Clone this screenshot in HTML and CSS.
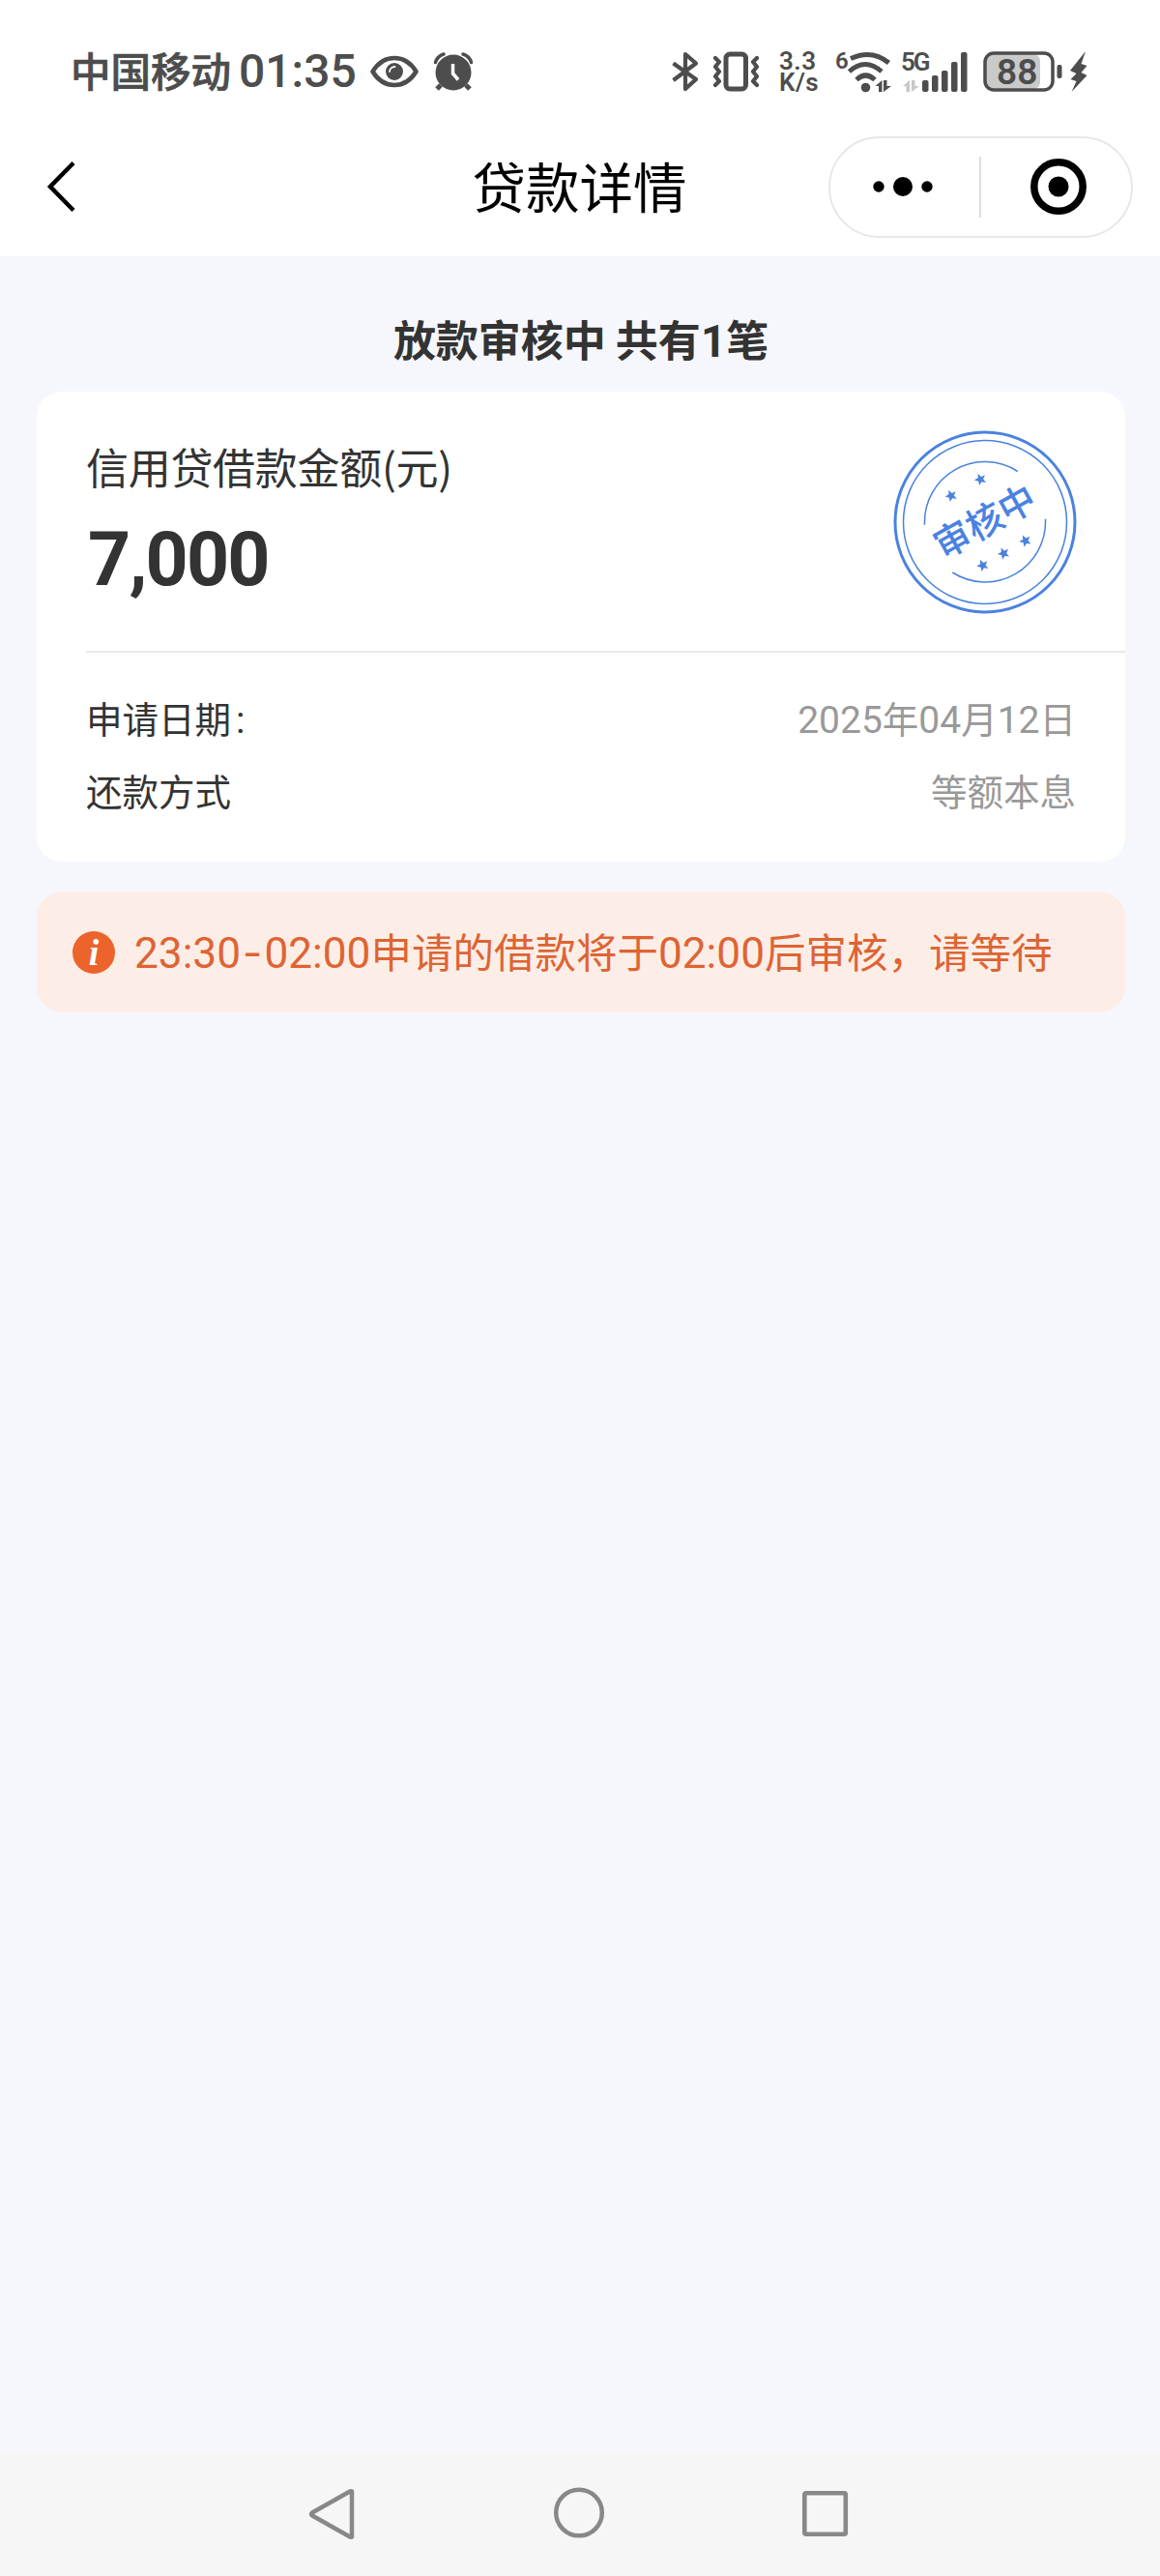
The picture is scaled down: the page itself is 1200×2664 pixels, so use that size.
FILE: index.html
```html
<!DOCTYPE html>
<html lang="zh-CN">
  <head>
    <meta charset="UTF-8" />
    <meta name="viewport" content="width=device-width, initial-scale=1.0" />
    <title>贷款详情</title>
    <link rel="stylesheet" href="styles.css">
  </head>
  <body>
    <div class="page">
      <!-- Status bar -->
      <div class="status-bar">
        <div class="status-left">
          <span class="carrier">中国移动</span>
          <span class="time">01:35</span>
          <svg class="icon-eye" width="50" height="34" viewBox="0 0 50 34">
            <path d="M2.5 17C8 8 16 3 25 3s17 5 22.500 14C42 26 34 31 25 31S8 26 2.500 17z" fill="none" stroke="#4d4d4d" stroke-width="4.600" stroke-linejoin="round" />
            <circle cx="25" cy="17" r="9" fill="#4d4d4d" />
            <path d="M20 17a5.500 5.500 0 0 1 5.500-5" fill="none" stroke="#fff" stroke-width="1.800" stroke-linecap="round" />
          </svg>
          <svg class="icon-alarm" width="40" height="40" viewBox="0 0 40 40">
            <path d="M7 34l-4 4M33 34l4 4" stroke="#4d4d4d" stroke-width="5" />
            <circle cx="20" cy="21" r="18.500" fill="#4d4d4d" />
            <path d="M1.500 10.500Q3.500 4 10 2M38.500 10.500Q36.500 4 30 2" fill="none" stroke="#4d4d4d" stroke-width="3.500" stroke-linecap="round" />
            <path d="M19.500 12v10l5.500 6.500" fill="none" stroke="#fff" stroke-width="3.500" />
          </svg>
        </div>

        <div class="status-right">
          <svg class="icon-bluetooth" width="28" height="42" viewBox="0 0 28 42">
            <path d="M1.500 12.500L25 29 14 39V3l11 9.500L1.500 30" fill="none" stroke="#4d4d4d" stroke-width="4.200" stroke-linejoin="round" />
          </svg>
          <svg class="icon-vibrate" width="50" height="42" viewBox="0 0 50 42">
            <rect x="14" y="3" width="20.500" height="36" rx="4" fill="none" stroke="#4d4d4d" stroke-width="5" />
            <path d="M3 7l4 4-4 5 4 5-4 5 4 5-4 4M46 7l-4 4 4 5-4 5 4 5-4 5 4 4" fill="none" stroke="#4d4d4d" stroke-width="4.200" stroke-linejoin="round" stroke-linecap="round" />
          </svg>
          <div class="speed">
            <span>3.3</span>
            <span>K/s</span>
          </div>
          <svg class="icon-wifi" width="60" height="44" viewBox="0 0 60 44">
            <text class="wifi-gen" x="-1" y="19">6</text>
            <g fill="none" stroke="#4d4d4d" stroke-width="5">
              <path d="M15 8.500Q37 -1.500 54.500 13" />
              <path d="M13.500 22Q30 7 47 22" />
              <path d="M21 30.500Q30.500 21.500 40 30.500" />
            </g>
            <circle cx="30.500" cy="38.500" r="4.800" fill="#4d4d4d" />
            <path d="M40.500 37l7-6v12h-3.500v-6zM49 31h3.500v6H57l-8 6z" fill="#4d4d4d" />
          </svg>
          <svg class="icon-signal" width="68" height="44" viewBox="0 0 68 44">
            <text class="signal-gen" x="-2" y="20.500">5G</text>
            <path d="M0 37l7-6v12H3.500v-6zM9 31h3.500v6H17l-8 6z" fill="#c8c8c8" />
            <g fill="#4d4d4d">
              <rect x="20" y="31" width="6.500" height="12" rx="2" />
              <rect x="30" y="26" width="6.500" height="17" rx="2" />
              <rect x="40" y="21" width="6.500" height="22" rx="2" />
              <rect x="50" y="12" width="6.500" height="31" rx="2" />
              <rect x="60" y="2" width="6.500" height="41" rx="2" />
            </g>
          </svg>
          <svg class="icon-battery" width="84" height="42" viewBox="0 0 84 42">
            <rect x="3" y="3" width="56" height="36" rx="7" fill="#cacaca" />
            <rect x="2" y="2" width="70" height="38" rx="9" fill="none" stroke="#4d4d4d" stroke-width="3.500" />
            <rect x="76.500" y="14" width="5" height="14" rx="2" fill="#4d4d4d" />
            <text class="battery-level" x="14" y="34">88</text>
          </svg>
          <svg class="icon-bolt" width="18" height="42" viewBox="0 0 18 42">
            <path d="M16 0L0 20l6.500 3L0.500 29l6 2-5 11L17.500 25l-6-3 6-7-6-2z" fill="#4d4d4d" />
          </svg>
        </div>
      </div>

      <!-- Title bar -->
      <div class="nav-bar">
        <svg class="nav-back" width="34" height="56" viewBox="0 0 34 56">
          <path d="M29 3.500L5 28l24 24.500" fill="none" stroke="#000" stroke-width="4.500" />
        </svg>
        <h1 class="nav-title">贷款详情</h1>
        <div class="capsule">
          <svg class="capsule-more" width="62" height="22" viewBox="0 0 62 22">
            <circle cx="6" cy="11" r="5.700" />
            <circle cx="31" cy="11" r="10" />
            <circle cx="56" cy="11" r="5.700" />
          </svg>
          <span class="capsule-line"></span>
          <svg class="capsule-close" width="60" height="60" viewBox="0 0 60 60">
            <circle cx="30" cy="30" r="25.200" fill="none" stroke="#000" stroke-width="7.500" />
            <circle cx="30" cy="30" r="10.500" />
          </svg>
        </div>
      </div>

      <div class="content">
        <h2 class="summary">放款审核中 共有<span class="num">1</span>笔</h2>

        <div class="card">
          <div class="card-top">
            <div>
              <p class="amount-label">信用贷借款金额(元)</p>
              <p class="amount">7,000</p>
            </div>
            <svg class="stamp" width="190" height="190" viewBox="-95 -95 190 190">
              <defs>
                <path id="star" d="M0-6.500L1.700-2.300 6.200-2 2.700.9 3.800 5.300 0 2.900-3.800 5.300-2.700.9-6.200-2-1.700-2.300z" />
              </defs>
              <g fill="none" stroke="#4a82e0">
                <circle r="93" stroke-width="3" />
                <circle r="84.500" stroke-width="1.500" />
                <path d="M-62.500 2.700A62.500 62.500 0 0 1 33.700-52.500" stroke-width="1.500" />
                <path d="M62.500-3.300A62.500 62.500 0 0 1-33.700 52" stroke-width="1.500" />
              </g>
              <g fill="#4a82e0">
                <use href="#star" transform="translate(-35 -27.300) rotate(-25)" />
                <use href="#star" transform="translate(-4.700 -44.300) rotate(-25)" />
                <use href="#star" transform="translate(-2.300 44.700) rotate(-25)" />
                <use href="#star" transform="translate(19.300 32.300) rotate(-25)" />
                <use href="#star" transform="translate(41.700 19.300) rotate(-25)" />
              </g>
              <text class="stamp-text" text-anchor="middle" transform="rotate(-29)" x="0" y="13">审核中</text>
            </svg>
          </div>

          <div class="card-rows">
            <div class="row">
              <span>申请日期<span class="num colon">:</span></span>
              <span class="value"><span class="num">2025</span>年<span class="num">04</span>月<span class="num">12</span>日</span>
            </div>
            <div class="row">
              <span>还款方式</span>
              <span class="value">等额本息</span>
            </div>
          </div>
        </div>

        <div class="notice">
          <svg class="notice-icon" width="44" height="44" viewBox="0 0 44 44">
            <circle cx="22" cy="22" r="22" fill="#ec642b" />
            <text class="notice-i" x="22" y="35" text-anchor="middle">i</text>
          </svg>
          <p class="notice-text"><span class="num">23:30<span class="dash">-</span>02:00</span>申请的借款将于<span class="num">02:00</span>后审核，请等待</p>
        </div>
      </div>

      <!-- System navigation -->
      <div class="system-nav">
        <svg width="56" height="56" viewBox="0 0 56 56">
          <path d="M48 4.500v47q-1 .5-2 0L7 29.500q-2-1.500 0-3L46 4.500q1-.5 2 0z" fill="none" stroke="#888" stroke-width="4.500" stroke-linejoin="round" />
        </svg>
        <svg width="56" height="56" viewBox="0 0 56 56">
          <circle cx="28" cy="26.500" r="23.800" fill="none" stroke="#888" stroke-width="4.500" />
        </svg>
        <svg width="56" height="56" viewBox="0 0 56 56">
          <rect x="6.300" y="6.300" width="42.500" height="42.500" rx="1.500" fill="none" stroke="#888" stroke-width="4.600" />
        </svg>
      </div>
    </div>
  </body>
</html>
```
FILE: styles.css
```css
* {
  box-sizing: border-box;
}

body {
  margin: 0;
  font-family: "Noto Sans CJK SC", sans-serif;
  color: #333;
  background: #f6f7fc;
}

h1,
h2,
p {
  margin: 0;
}

svg {
  display: block;
  flex-shrink: 0;
  overflow: visible;
}

.page {
  display: flex;
  flex-direction: column;
  width: 1200px;
  min-height: 2664px;
}

.num {
  font-family: Roboto, sans-serif;
  font-size: 1.04em;
}

/* status bar */
.status-bar {
  display: flex;
  justify-content: space-between;
  height: 121px;
  padding: 26px 75px 0 73px;
  background: #fff;
  color: #4d4d4d;
}

.status-left,
.status-right {
  display: flex;
  align-items: center;
  height: 96px;
}

.carrier {
  margin-bottom: 4px;
  font-size: 41.5px;
  font-weight: 500;
  line-height: 60px;
  -webkit-text-stroke: 0.7px #4d4d4d;
}

.time {
  width: 125px;
  margin-left: 8px;
  font-family: Roboto, sans-serif;
  font-size: 48px;
  font-weight: 500;
  line-height: 60px;
  white-space: nowrap;
}

.icon-eye {
  margin-left: 11px;
}

.icon-alarm {
  margin-left: 16px;
}

.icon-vibrate {
  margin-left: 14px;
}

.speed {
  display: flex;
  flex-direction: column;
  width: 44px;
  margin-left: 19px;
  font-family: Roboto, sans-serif;
  font-size: 26px;
  font-weight: 600;
  letter-spacing: 0.5px;
  line-height: 22px;
}

.icon-wifi {
  margin-left: 15px;
}

.icon-signal {
  margin-left: 9px;
}

.icon-battery {
  margin-left: 15px;
}

.icon-bolt {
  margin-left: 6px;
}

.wifi-gen,
.signal-gen,
.battery-level {
  font-family: Roboto, sans-serif;
  font-weight: 600;
  fill: #4d4d4d;
}

.wifi-gen {
  font-size: 24px;
}

.signal-gen {
  font-size: 26px;
  letter-spacing: -2px;
}

.battery-level {
  font-size: 37px;
}

/* title bar */
.nav-bar {
  display: grid;
  grid-template-columns: 315px 1fr 315px;
  align-items: center;
  height: 144px;
  padding: 0 28px 0 47px;
  background: #fff;
}

.nav-title {
  margin: 0 20px 5px 0;
  color: #000;
  font-size: 55.5px;
  font-weight: 400;
  line-height: 80px;
  text-align: center;
  white-space: nowrap;
}

.capsule {
  display: flex;
  align-items: center;
  width: 315px;
  height: 105px;
  padding: 0 44px 0 44px;
  border: 2px solid #e7e7e7;
  border-radius: 53px;
}

.capsule-line {
  width: 2px;
  height: 63px;
  margin: 0 50px 0 48px;
  background: #dedede;
}

/* loan details */
.content {
  flex: 1;
  padding: 53px 36px 0 38px;
}

.summary {
  height: 64px;
  margin-bottom: 23px;
  font-size: 44px;
  font-weight: 700;
  line-height: 64px;
  text-align: center;
}

.card {
  height: 486px;
  padding-left: 51px;
  border-radius: 26px;
  background: #fff;
}

.card-top {
  display: flex;
  justify-content: space-between;
  height: 270px;
  padding: 40px 50px 0 0;
  border-bottom: 2px solid #e8e8e8;
}

.amount-label {
  font-size: 44px;
  letter-spacing: -0.3px;
  line-height: 74px;
}

.amount {
  margin-left: 2px;
  font-family: Roboto, sans-serif;
  font-size: 77px;
  font-weight: 700;
  letter-spacing: -1.8px;
  line-height: 120px;
}

.stamp-text {
  font-size: 38px;
  font-weight: 500;
  fill: #4a82e0;
}

.card-rows {
  padding: 29px 51px 0 0;
}

.row {
  display: flex;
  justify-content: space-between;
  height: 75px;
  font-size: 37.5px;
  line-height: 75px;
}

.colon {
  margin-left: 5px;
}

.value {
  color: #999;
}

.notice {
  display: flex;
  align-items: center;
  height: 125px;
  margin-top: 31px;
  padding-left: 37px;
  border-radius: 26px;
  background: #fceee7;
}

.notice-text {
  margin-left: 20px;
  color: #de6433;
  font-size: 42.5px;
  line-height: 64px;
  white-space: nowrap;
}

.dash {
  margin: 0 2px;
  font-family: Inter, sans-serif;
}

.notice-i {
  font-family: "Liberation Serif", serif;
  font-size: 38px;
  font-style: italic;
  font-weight: 700;
  fill: #fff;
}

/* system navigation */
.system-nav {
  display: flex;
  justify-content: center;
  gap: 199px;
  height: 128px;
  padding: 36px 2px 0 0;
  background: #f6f6f6;
}
```
